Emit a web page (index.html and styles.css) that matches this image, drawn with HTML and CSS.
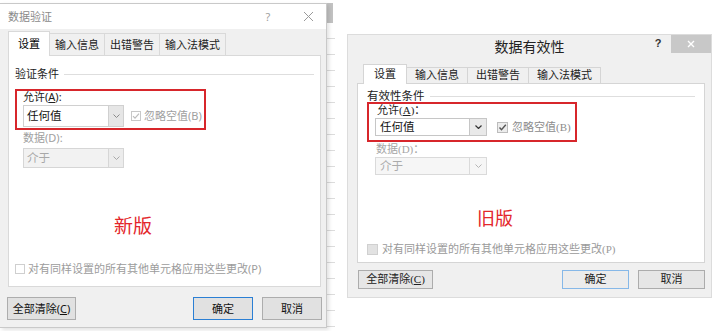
FILE: index.html
```html
<!DOCTYPE html>
<html lang="zh-CN">
<head>
<meta charset="utf-8">
<title>数据验证 / 数据有效性</title>
<link rel="stylesheet" href="styles.css">
</head>
<body>
<div class="stage">
  <section class="dlg-new">
    <header class="tb-new">
      <span class="tb-title">数据验证</span>
      <span class="tb-help">?</span>
      <span class="tb-close"><svg width="11" height="11" viewBox="0 0 11 11"><path d="M1 1L10 10M10 1L1 10" stroke="#9a9a9a" stroke-width="1" fill="none"/></svg></span>
    </header>
    <div class="new-body">
      <div class="tabs-new">
        <div class="tab-n active">设置</div>
        <div class="tab-n">输入信息</div>
        <div class="tab-n">出错警告</div>
        <div class="tab-n">输入法模式</div>
      </div>
      <div class="panel-new">
        <div class="grp"><span>验证条件</span><i class="grp-line"></i></div>
        <div class="redbox-new">
          <div class="lbl">允许(<u>A</u>):</div>
          <div class="row-new">
            <div class="sel-new"><span class="sel-text">任何值</span><span class="sel-btn"><svg width="7" height="4" viewBox="0 0 7 4"><polyline points="0.5,0.5 3.5,3.5 6.5,0.5" fill="none" stroke="#8a8a8a" stroke-width="1"/></svg></span></div>
            <span class="chk-n"><svg width="8" height="8" viewBox="0 0 8 8"><polyline points="1,4.2 3,6.2 7,1.6" fill="none" stroke="#bdbdbd" stroke-width="1.2"/></svg></span>
            <span class="chk-label-n">忽略空值(B)</span>
          </div>
        </div>
        <div class="data-new">
          <div class="lbl dis">数据(D):</div>
          <div class="sel-new sel-dis"><span class="sel-text">介于</span><span class="sel-btn"><svg width="7" height="4" viewBox="0 0 7 4"><polyline points="0.5,0.5 3.5,3.5 6.5,0.5" fill="none" stroke="#a8a8a8" stroke-width="1"/></svg></span></div>
        </div>
        <div class="tag-new">新版</div>
        <div class="apply-new"><span class="chk-n empty"></span><span class="apply-text">对有同样设置的所有其他单元格应用这些更改(P)</span></div>
      </div>
    </div>
    <footer class="ft-new">
      <button class="btn-n btn-clear">全部清除(<u>C</u>)</button>
      <button class="btn-n btn-ok">确定</button>
      <button class="btn-n btn-cancel">取消</button>
    </footer>
  </section>

  <div class="sheet"><div class="sheet-head"></div><div class="sheet-grid"></div></div>

  <div class="right-area">
    <section class="dlg-old">
      <header class="tb-old">
        <span class="tb-old-title">数据有效性</span>
        <span class="tb-old-ctrls">
          <span class="tb-old-help">?</span>
          <span class="tb-old-close"><svg width="8" height="8" viewBox="0 0 8 8"><path d="M1 1L7 7M7 1L1 7" stroke="#fff" stroke-width="1.4" fill="none"/></svg></span>
        </span>
      </header>
      <div class="old-body">
        <div class="tabs-old">
          <div class="tab-o active">设置</div>
          <div class="tab-o">输入信息</div>
          <div class="tab-o">出错警告</div>
          <div class="tab-o">输入法模式</div>
        </div>
        <div class="panel-old">
          <div class="grp-old"><span>有效性条件</span><i class="grp-line"></i></div>
          <div class="redbox-old">
            <div class="lbl-old">允许(<u>A</u>)：</div>
            <div class="row-old">
              <div class="sel-old"><span class="sel-text-old">任何值</span><span class="sel-btn-old"><svg width="7" height="4" viewBox="0 0 7 4"><polyline points="0.5,0.5 3.5,3.5 6.5,0.5" fill="none" stroke="#333" stroke-width="1.2"/></svg></span></div>
              <span class="chk-o"><svg width="9" height="9" viewBox="0 0 9 9"><polyline points="1.5,4.5 3.5,6.8 7.8,1.8" fill="none" stroke="#555" stroke-width="1.4"/></svg></span>
              <span class="chk-label-o">忽略空值(B)</span>
            </div>
          </div>
          <div class="data-old">
            <div class="lbl-old dis-o">数据(D)：</div>
            <div class="sel-old sel-old-dis"><span class="sel-text-old">介于</span><span class="sel-btn-old"><svg width="7" height="4" viewBox="0 0 7 4"><polyline points="0.5,0.5 3.5,3.5 6.5,0.5" fill="none" stroke="#b5b5b5" stroke-width="1"/></svg></span></div>
          </div>
          <div class="tag-old">旧版</div>
          <div class="apply-old"><span class="chk-o empty"></span><span class="apply-text-o">对有同样设置的所有其他单元格应用这些更改(P)</span></div>
        </div>
      </div>
      <footer class="ft-old">
        <button class="btn-o btn-o-clear">全部清除(<u>C</u>)</button>
        <button class="btn-o btn-o-ok">确定</button>
        <button class="btn-o btn-o-cancel">取消</button>
      </footer>
    </section>
  </div>
</div>
</body>
</html>
```

FILE: styles.css
```css
* { box-sizing: border-box; }
body { margin: 0; background: #fff; }
.stage {
  display: flex;
  width: 720px;
  height: 331px;
  overflow: hidden;
  background: #fff;
  font-family: "Noto Sans", "Noto Sans CJK SC", sans-serif;
}
u { text-decoration: underline; text-underline-offset: 1px; }
button { font-family: inherit; padding: 0; margin: 0; cursor: default; }

/* ---------- new dialog ---------- */
.dlg-new {
  flex: none;
  width: 327px;
  height: 325px;
  margin-top: 3px;
  background: #f0f0f0;
  border: 1px solid #c9c9c9;
  border-left: none;
  display: flex;
  flex-direction: column;
  box-shadow: 2px 2px 4px rgba(0,0,0,0.12);
  position: relative;
  z-index: 2;
}
.tb-new {
  flex: none;
  height: 25px;
  background: #fff;
  display: flex;
  align-items: center;
  padding-left: 8px;
  font-size: 11px;
  color: #8a8a8a;
}
.tb-title { flex: 1; line-height: 14px; }
.tb-help { width: 20px; text-align: center; margin-right: 15px; color: #a0a0a0; }
.tb-close { width: 30px; display: flex; justify-content: center; margin-right: 3px; }

.new-body { flex: none; padding: 2px 0 0 8px; }
.tabs-new { display: flex; align-items: flex-end; height: 24px; }
.tab-n {
  height: 22px;
  padding: 0 5px;
  margin-left: -1px;
  border: 1px solid #d9d9d9;
  border-bottom: none;
  background: #f0f0f0;
  font-size: 11px;
  line-height: 21px;
  color: #222;
}
.tab-n.active {
  height: 25px;
  margin-left: 0;
  margin-bottom: -1px;
  padding: 0 9px;
  background: #fff;
  color: #000;
  line-height: 23px;
  position: relative;
  z-index: 1;
}
.panel-new {
  width: 313px;
  height: 232px;
  border: 1px solid #d9d9d9;
  background: #fff;
  padding: 0 6px;
  display: flex;
  flex-direction: column;
}
.grp {
  display: flex;
  align-items: center;
  margin-top: 10px;
  font-size: 11px;
  line-height: 16px;
  color: #222;
}
.grp-line { flex: 1; height: 1px; background: #dedede; margin-left: 5px; }
.redbox-new {
  width: 191px;
  border: 2px solid #d7262b;
  margin-top: 7px;
  padding: 0 0 1px 6px;
}
.lbl { font-size: 11px; line-height: 12px; color: #222; }
.lbl.dis { color: #a0a0a0; }
.row-new { display: flex; align-items: center; margin-top: 2px; }
.sel-new {
  width: 101px;
  height: 22px;
  border: 1px solid #d0d0d0;
  background: #fff;
  display: flex;
}
.sel-text { flex: 1; padding-left: 3px; font-size: 11.5px; line-height: 20px; color: #111; }
.sel-btn {
  width: 15px;
  border-left: 1px solid #d0d0d0;
  background: #e6e6e6;
  display: flex;
  align-items: center;
  justify-content: center;
}
.sel-new.sel-dis { height: 20px; background: #f2f2f2; border-color: #d6d6d6; }
.sel-dis .sel-text { line-height: 18px; color: #a8a8a8; }
.sel-dis .sel-btn { background: #ececec; border-left-color: #d6d6d6; }
.chk-n {
  width: 10px;
  height: 10px;
  margin-left: 7px;
  border: 1px solid #c8c8c8;
  background: #fff;
  display: flex;
  align-items: center;
  justify-content: center;
}
.chk-label-n { margin-left: 3px; font-size: 11px; color: #a0a0a0; line-height: 14px; }
.data-new { padding-left: 8px; margin-top: 2px; }
.data-new .sel-new { margin-top: 4px; }
.tag-new {
  margin-top: 46px;
  margin-left: 99px;
  font-size: 19px;
  line-height: 24px;
  color: #e3262b;
}
.apply-new {
  margin-top: auto;
  margin-bottom: 10px;
  display: flex;
  align-items: center;
}
.apply-new .chk-n { margin-left: 0; border-color: #cfcfcf; }
.apply-text { margin-left: 3px; font-size: 11px; line-height: 14px; color: #9c9c9c; }

.ft-new { flex: none; display: flex; padding: 10px 4px 0 7px; }
.btn-n {
  height: 23px;
  border: 1px solid #adadad;
  background: #e1e1e1;
  font-size: 11px;
  line-height: 21px;
  text-align: center;
  color: #111;
}
.btn-clear { width: 69px; }
.btn-ok { width: 60px; margin-left: auto; border-color: #2b7fd4; }
.btn-cancel { width: 60px; margin-left: 9px; }

/* ---------- sheet strip ---------- */
.sheet { flex: none; width: 8px; display: flex; flex-direction: column; }
.sheet-head { height: 20px; width: 6px; margin-top: 3px; background: #c2c2c2; }
.sheet-grid {
  flex: 1;
  background: repeating-linear-gradient(to bottom, #fff 0 15px, #dcdcdc 15px 16px);
}

/* ---------- old dialog ---------- */
.right-area { flex: none; padding: 34px 0 0 12px; }
.dlg-old {
  width: 365px;
  height: 264px;
  border: 1px solid #dcdcdc;
  background: #f0f0f0;
  display: flex;
  flex-direction: column;
  font-family: "Liberation Serif", "Noto Sans CJK SC", serif;
}
.tb-old {
  flex: none;
  height: 22px;
  display: grid;
  grid-template-columns: 1fr auto 1fr;
  align-items: start;
}
.tb-old-title {
  grid-column: 2;
  font-family: "Noto Sans CJK SC", sans-serif;
  font-size: 14px;
  line-height: 22px;
  color: #222;
}
.tb-old-ctrls { grid-column: 3; display: flex; justify-content: flex-end; align-items: flex-start; }
.tb-old-help {
  width: 14px;
  margin-right: 6px;
  text-align: center;
  font-family: "Liberation Sans", sans-serif;
  font-weight: bold;
  font-size: 11px;
  line-height: 16px;
  color: #333;
}
.tb-old-close {
  width: 40px;
  height: 18px;
  background: #c8c8c8;
  display: flex;
  align-items: center;
  justify-content: center;
}
.old-body { flex: none; padding: 0 6px 0 9px; }
.tabs-old { display: flex; align-items: flex-end; height: 26px; padding-left: 6px; }
.tab-o {
  height: 16px;
  padding: 0 8px;
  margin-left: -1px;
  border: 1px solid #d5d5d5;
  border-bottom: none;
  background: #f0f0f0;
  font-size: 11px;
  line-height: 15px;
  color: #222;
}
.tab-o.active {
  height: 20px;
  margin-left: 0;
  margin-bottom: -1px;
  padding: 0 10px;
  background: #fff;
  line-height: 18px;
  position: relative;
  z-index: 1;
}
.panel-old {
  height: 180px;
  border: 1px solid #d5d5d5;
  background: #fff;
  padding: 0 9px;
  display: flex;
  flex-direction: column;
}
.grp-old {
  display: flex;
  align-items: center;
  margin-top: 7px;
  font-size: 11.5px;
  line-height: 11px;
  color: #222;
}
.redbox-old {
  width: 210px;
  border: 2px solid #d7262b;
  padding: 0 0 4px 6px;
}
.lbl-old { padding-left: 2px; font-size: 11px; line-height: 12px; color: #222; }
.lbl-old.dis-o { padding-left: 1px; color: #a5a5a5; }
.row-old { display: flex; align-items: center; margin-top: 2px; }
.sel-old {
  width: 112px;
  height: 18px;
  border: 1px solid #c6c6c6;
  background: #fff;
  display: flex;
}
.sel-text-old { flex: 1; padding-left: 4px; font-size: 11.5px; line-height: 16px; color: #111; }
.sel-btn-old {
  width: 17px;
  border-left: 1px solid #c6c6c6;
  background: #e9e9e9;
  display: flex;
  align-items: center;
  justify-content: center;
}
.sel-old-dis { background: #f6f6f6; border-color: #dadada; }
.sel-old-dis .sel-text-old { color: #ababab; }
.sel-old-dis .sel-btn-old { background: #f6f6f6; border-left-color: #dadada; }
.chk-o {
  width: 11px;
  height: 11px;
  margin-left: 10px;
  border: 1px solid #bcbcbc;
  background: #ececec;
  display: flex;
  align-items: center;
  justify-content: center;
}
.chk-label-o { margin-left: 4px; font-size: 11px; line-height: 14px; color: #8c8c8c; }
.data-old { padding-left: 8px; margin-top: 1px; }
.data-old .sel-old { margin-top: 2px; }
.tag-old {
  margin-top: 31px;
  margin-left: 110px;
  font-family: "Noto Sans CJK SC", sans-serif;
  font-size: 18px;
  line-height: 22px;
  color: #e3262b;
}
.apply-old { margin-top: auto; margin-bottom: 6px; display: flex; align-items: center; }
.apply-old .chk-o { margin-left: 0; background: #e2e2e2; border-color: #d0d0d0; }
.apply-text-o { margin-left: 4px; font-size: 11px; line-height: 14px; color: #9a9a9a; }

.ft-old { flex: none; display: flex; padding: 7px 6px 0 10px; }
.btn-o {
  height: 19px;
  border: 1px solid #acacac;
  background: #e6e6e6;
  font-family: "Liberation Serif", "Noto Sans CJK SC", serif;
  font-size: 11px;
  line-height: 17px;
  text-align: center;
  color: #222;
}
.btn-o-clear { width: 75px; }
.btn-o-ok { width: 67px; margin-left: auto; border-color: #86b8e8; background: #ececec; }
.btn-o-cancel { width: 67px; margin-left: 9px; }
```
